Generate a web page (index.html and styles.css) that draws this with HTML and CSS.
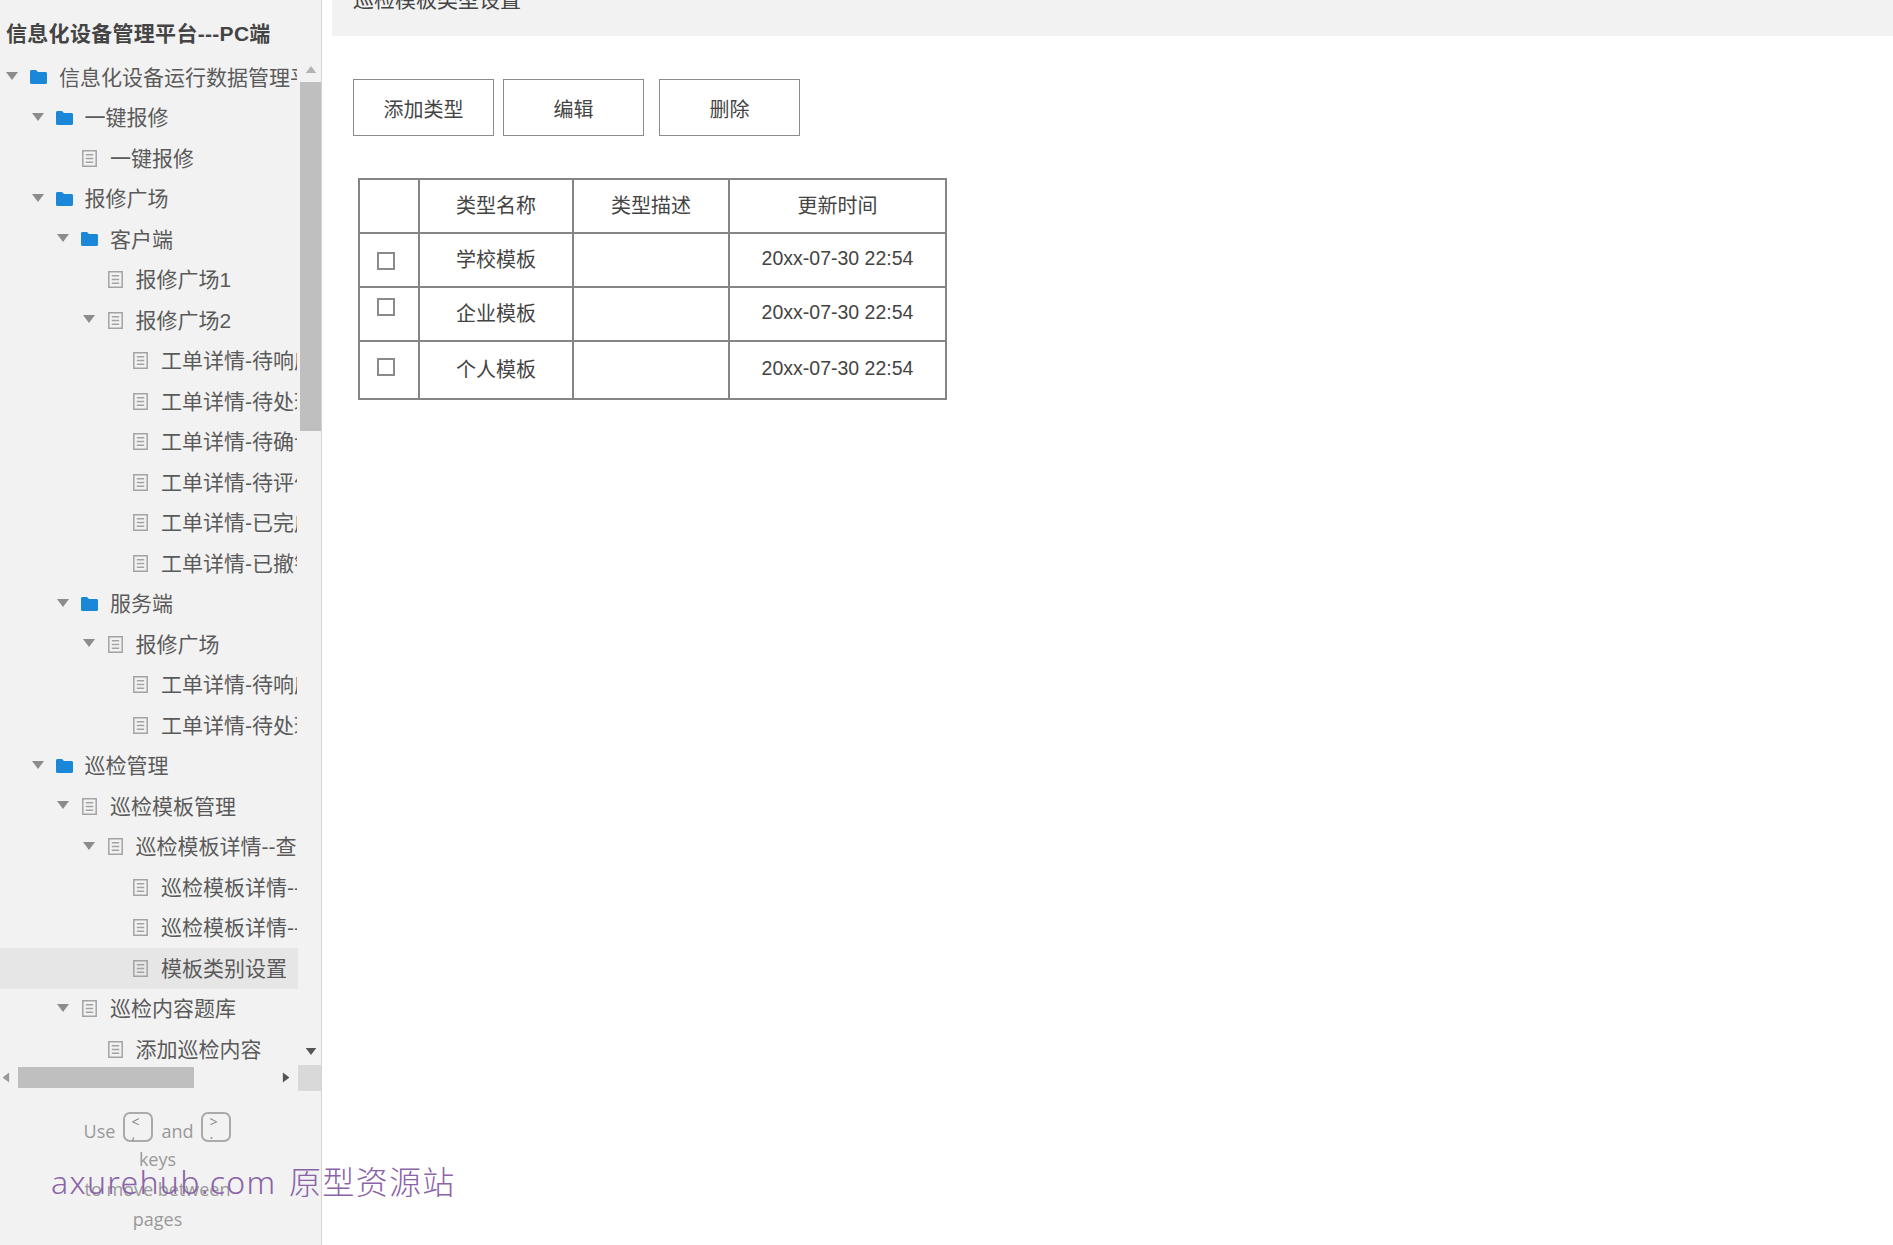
FILE: index.html
```html
<!DOCTYPE html>
<html lang="zh-CN">
<head>
  <meta charset="UTF-8">
  <title>模板类别设置</title>
  <link rel="stylesheet" href="styles.css">
</head>
<body>
  <svg class="defs" width="0" height="0">
    <symbol id="arrow" viewBox="0 0 12 8"><path d="M0 0h12L6 8z"/></symbol>
    <symbol id="folder" viewBox="0 0 17 14"><path d="M0 1.5C0 .6.6 0 1.5 0H6l2 2h7.5c.9 0 1.5.6 1.5 1.5v9c0 .9-.6 1.5-1.5 1.5h-14C.6 14 0 13.4 0 12.5z"/></symbol>
    <symbol id="file" viewBox="0 0 14 16"><path d="M.7.7h12.6v14.6H.7zM3.5 4.5h7M3.5 8h7M3.5 11.5h7"/></symbol>
  </svg>

  <aside class="sidebar">
    <div class="site-title">信息化设备管理平台---PC端</div>

    <div class="tree-box">
      <ul class="tree">
        <li class="row lvl-0"><svg class="arrow"><use href="#arrow"/></svg><svg class="icon folder"><use href="#folder"/></svg><span>信息化设备运行数据管理平台</span></li>
        <li class="row lvl-1"><svg class="arrow"><use href="#arrow"/></svg><svg class="icon folder"><use href="#folder"/></svg><span>一键报修</span></li>
        <li class="row lvl-2"><i class="arrow"></i><svg class="icon file"><use href="#file"/></svg><span>一键报修</span></li>
        <li class="row lvl-1"><svg class="arrow"><use href="#arrow"/></svg><svg class="icon folder"><use href="#folder"/></svg><span>报修广场</span></li>
        <li class="row lvl-2"><svg class="arrow"><use href="#arrow"/></svg><svg class="icon folder"><use href="#folder"/></svg><span>客户端</span></li>
        <li class="row lvl-3"><i class="arrow"></i><svg class="icon file"><use href="#file"/></svg><span>报修广场1</span></li>
        <li class="row lvl-3"><svg class="arrow"><use href="#arrow"/></svg><svg class="icon file"><use href="#file"/></svg><span>报修广场2</span></li>
        <li class="row lvl-4"><i class="arrow"></i><svg class="icon file"><use href="#file"/></svg><span>工单详情-待响应</span></li>
        <li class="row lvl-4"><i class="arrow"></i><svg class="icon file"><use href="#file"/></svg><span>工单详情-待处理</span></li>
        <li class="row lvl-4"><i class="arrow"></i><svg class="icon file"><use href="#file"/></svg><span>工单详情-待确认</span></li>
        <li class="row lvl-4"><i class="arrow"></i><svg class="icon file"><use href="#file"/></svg><span>工单详情-待评价</span></li>
        <li class="row lvl-4"><i class="arrow"></i><svg class="icon file"><use href="#file"/></svg><span>工单详情-已完成</span></li>
        <li class="row lvl-4"><i class="arrow"></i><svg class="icon file"><use href="#file"/></svg><span>工单详情-已撤销</span></li>
        <li class="row lvl-2"><svg class="arrow"><use href="#arrow"/></svg><svg class="icon folder"><use href="#folder"/></svg><span>服务端</span></li>
        <li class="row lvl-3"><svg class="arrow"><use href="#arrow"/></svg><svg class="icon file"><use href="#file"/></svg><span>报修广场</span></li>
        <li class="row lvl-4"><i class="arrow"></i><svg class="icon file"><use href="#file"/></svg><span>工单详情-待响应</span></li>
        <li class="row lvl-4"><i class="arrow"></i><svg class="icon file"><use href="#file"/></svg><span>工单详情-待处理</span></li>
        <li class="row lvl-1"><svg class="arrow"><use href="#arrow"/></svg><svg class="icon folder"><use href="#folder"/></svg><span>巡检管理</span></li>
        <li class="row lvl-2"><svg class="arrow"><use href="#arrow"/></svg><svg class="icon file"><use href="#file"/></svg><span>巡检模板管理</span></li>
        <li class="row lvl-3"><svg class="arrow"><use href="#arrow"/></svg><svg class="icon file"><use href="#file"/></svg><span>巡检模板详情--查看</span></li>
        <li class="row lvl-4"><i class="arrow"></i><svg class="icon file"><use href="#file"/></svg><span>巡检模板详情--新增</span></li>
        <li class="row lvl-4"><i class="arrow"></i><svg class="icon file"><use href="#file"/></svg><span>巡检模板详情--编辑</span></li>
        <li class="row lvl-4 selected"><i class="arrow"></i><svg class="icon file"><use href="#file"/></svg><span>模板类别设置</span></li>
        <li class="row lvl-2"><svg class="arrow"><use href="#arrow"/></svg><svg class="icon file"><use href="#file"/></svg><span>巡检内容题库</span></li>
        <li class="row lvl-3"><i class="arrow"></i><svg class="icon file"><use href="#file"/></svg><span>添加巡检内容</span></li>
      </ul>

      <div class="vscroll">
        <div class="vscroll-btn"><svg class="btn-up"><use href="#arrow"/></svg></div>
        <div class="vscroll-thumb"></div>
        <div class="vscroll-btn down"><svg class="btn-down"><use href="#arrow"/></svg></div>
      </div>
    </div>

    <div class="hscroll">
      <svg class="btn-left"><use href="#arrow"/></svg>
      <div class="hscroll-thumb"></div>
      <svg class="btn-right"><use href="#arrow"/></svg>
      <div class="corner"></div>
    </div>

    <div class="key-hint">
      <div class="key-line">
        <span>Use</span>
        <span class="key"><b>&lt;</b><b>,</b></span>
        <span>and</span>
        <span class="key"><b>&gt;</b><b>.</b></span>
      </div>
      <div>keys</div>
      <div>to move between</div>
      <div>pages</div>
    </div>
  </aside>

  <main class="content">
    <div class="page-bar"><span>巡检模板类型设置</span></div>

    <div class="toolbar">
      <button>添加类型</button>
      <button>编辑</button>
      <button class="btn-del">删除</button>
    </div>

    <table class="type-table">
      <colgroup>
        <col class="col-check">
        <col class="col-name">
        <col class="col-desc">
        <col class="col-time">
      </colgroup>
      <tr>
        <td></td>
        <td>类型名称</td>
        <td>类型描述</td>
        <td>更新时间</td>
      </tr>
      <tr>
        <td><span class="check check-1"></span></td>
        <td>学校模板</td>
        <td></td>
        <td class="time">20xx-07-30 22:54</td>
      </tr>
      <tr>
        <td><span class="check check-2"></span></td>
        <td>企业模板</td>
        <td></td>
        <td class="time">20xx-07-30 22:54</td>
      </tr>
      <tr class="last">
        <td><span class="check check-3"></span></td>
        <td>个人模板</td>
        <td></td>
        <td class="time">20xx-07-30 22:54</td>
      </tr>
    </table>
  </main>

  <div class="watermark">axurehub.com 原型资源站</div>
</body>
</html>
```

FILE: styles.css
```css
* {
  box-sizing: border-box;
}

html, body {
  height: 100%;
}

body {
  margin: 0;
  display: flex;
  overflow: hidden;
  background: #fff;
  color: #555;
  font-family: "Liberation Sans", "Noto Sans CJK SC", sans-serif;
}

.defs {
  position: absolute;
}

/* Sidebar */
.sidebar {
  width: 322px;
  height: 1245px;
  flex-shrink: 0;
  display: flex;
  flex-direction: column;
  background: #f2f2f2;
  border-right: 1px solid #d4d4d4;
}

.site-title {
  height: 57px;
  padding: 20px 0 0 6px;
  line-height: 28px;
  font-size: 21px;
  font-weight: bold;
  letter-spacing: 0.3px;
  color: #444;
  white-space: nowrap;
}

.tree-box {
  height: 1010px;
  display: flex;
}

.tree {
  width: 298px;
  margin: 0;
  padding: 0;
  list-style: none;
  overflow: hidden;
}

.row {
  height: 40.5px;
  padding-right: 1px;
  display: flex;
  align-items: center;
  font-size: 21px;
  color: #5a5a5a;
  white-space: nowrap;
}

.row span {
  min-width: 0;
  margin-top: -3px;
  overflow: hidden;
}

.row.selected {
  background: #e6e6e6;
}

.lvl-0 { padding-left: 6px; }
.lvl-1 { padding-left: 31.5px; }
.lvl-2 { padding-left: 57px; }
.lvl-3 { padding-left: 82.5px; }
.lvl-4 { padding-left: 108px; }

.arrow {
  width: 12px;
  height: 8px;
  margin: -2px 12px 0 0;
  flex-shrink: 0;
  fill: #8c8c8c;
}

.icon {
  flex-shrink: 0;
  margin-right: 12px;
}

.folder {
  width: 17px;
  height: 14px;
  fill: #1b87d9;
}

.file {
  width: 17px;
  height: 17px;
  padding: 0 1px;
  fill: none;
  stroke: #a3a3a3;
  stroke-width: 1.4;
}

/* Fake scrollbars */
.vscroll {
  width: 21px;
  margin-left: 2px;
  display: flex;
  flex-direction: column;
}

.vscroll-btn {
  height: 25px;
  display: flex;
  align-items: center;
  justify-content: center;
}

.vscroll-btn.down {
  margin-top: auto;
  height: 34px;
  align-items: flex-start;
  padding-top: 15px;
}

.vscroll-thumb {
  height: 349px;
  background: #bfbfbf;
}

.btn-up {
  width: 12px;
  height: 7px;
  fill: #b3b3b3;
  transform: rotate(180deg);
}

.btn-down {
  width: 12px;
  height: 7px;
  fill: #555;
}

.hscroll {
  height: 26px;
  display: flex;
  align-items: flex-start;
}

.hscroll > * {
  flex-shrink: 0;
}

.hscroll-thumb {
  width: 176px;
  height: 21px;
  margin-left: 6px;
  background: #bfbfbf;
}

.btn-left, .btn-right {
  width: 12px;
  height: 7px;
  margin-top: 7px;
}

.btn-left {
  fill: #999;
  transform: rotate(90deg);
}

.btn-right {
  margin-left: 86px;
  fill: #555;
  transform: rotate(-90deg);
}

.corner {
  width: 23px;
  height: 26px;
  margin-left: 6px;
  margin-top: -2px;
  background: #d9d9d9;
}

.key-hint {
  padding: 19px 6px 0 0;
  text-align: center;
  font-family: "Open Sans", sans-serif;
  font-size: 18px;
  line-height: 30px;
  color: #999;
}

.key-line {
  height: 30px;
  margin-bottom: 2px;
  display: flex;
  justify-content: center;
  align-items: center;
  gap: 8px;
}

.key-line span:not(.key) {
  padding-top: 8px;
}

.key {
  width: 30px;
  height: 30px;
  padding: 2px 0 0 6px;
  display: flex;
  flex-direction: column;
  border: 2px solid #aaa;
  border-radius: 7px;
  text-align: left;
  font-size: 14px;
  line-height: 12px;
  color: #888;
}

.key b {
  font-weight: normal;
}

/* Main area */
.content {
  flex: 1;
  padding-left: 10px;
}

.page-bar {
  height: 36px;
  padding-left: 21px;
  background: #f2f2f2;
  overflow: hidden;
  font-size: 21px;
  line-height: 28px;
  color: #444;
}

.page-bar span {
  display: block;
  margin-top: -14px;
}

.toolbar {
  display: flex;
  gap: 9px;
  margin: 43px 0 0 21px;
}

.toolbar button {
  width: 141px;
  height: 57px;
  padding-top: 3px;
  background: #fff;
  border: 1px solid #8c8c8c;
  font-family: inherit;
  font-size: 20px;
  color: #444;
}

.toolbar .btn-del {
  margin-left: 6px;
}

.type-table {
  width: 587px;
  margin: 42px 0 0 26px;
  border-collapse: collapse;
  table-layout: fixed;
  font-size: 20px;
  color: #444;
  text-align: center;
}

.col-check { width: 60px; }
.col-name { width: 154px; }
.col-desc { width: 156px; }
.col-time { width: 217px; }

.type-table tr {
  height: 54px;
}

.type-table tr.last {
  height: 58px;
}

.type-table td {
  padding: 0 0 3px;
  border: 2px solid #858585;
}

.time {
  font-size: 19.5px;
}

.check {
  display: block;
  width: 18px;
  height: 18px;
  margin-left: 17px;
  border: 2px solid #8a8a8a;
}

.check-1 { margin-top: 5px; }
.check-2 { margin-top: -12px; }
.check-3 { margin-top: -3px; }

/* Site watermark printed over the page */
.watermark {
  position: absolute;
  left: 51px;
  top: 1160px;
  font-family: "Noto Sans", "Noto Sans CJK SC", sans-serif;
  font-size: 32px;
  font-weight: 300;
  line-height: 44px;
  letter-spacing: 1.3px;
  word-spacing: 3px;
  color: #8a63a8;
  white-space: nowrap;
}
```
